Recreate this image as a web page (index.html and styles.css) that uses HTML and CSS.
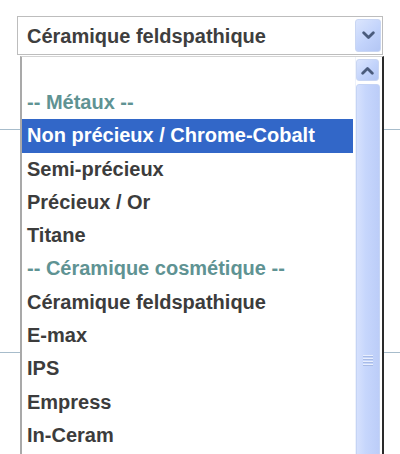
FILE: index.html
```html
<!DOCTYPE html>
<html>
<head>
<meta charset="utf-8">
<link rel="stylesheet" href="styles.css">
</head>
<body>
<div class="page">
  <div class="row row-top">
    <div class="select">
      <span class="select-value">Céramique feldspathique</span>
      <span class="select-btn">
        <svg width="13" height="9" viewBox="0 0 13 9"><path d="M1.7 1.8 L6.5 6.6 L11.3 1.8" fill="none" stroke="#4a5b7c" stroke-width="2.8" stroke-linecap="round" stroke-linejoin="round"/></svg>
      </span>
    </div>
  </div>
  <div class="row row-mid"></div>

  <div class="listbox">
    <ul class="options">
      <li class="opt blank">&nbsp;</li>
      <li class="opt group">-- Métaux --</li>
      <li class="opt selected">Non précieux / Chrome-Cobalt</li>
      <li class="opt">Semi-précieux</li>
      <li class="opt">Précieux / Or</li>
      <li class="opt">Titane</li>
      <li class="opt group">-- Céramique cosmétique --</li>
      <li class="opt">Céramique feldspathique</li>
      <li class="opt">E-max</li>
      <li class="opt">IPS</li>
      <li class="opt">Empress</li>
      <li class="opt">In-Ceram</li>
    </ul>
    <div class="scrollbar">
      <span class="sb-btn">
        <svg width="13" height="9" viewBox="0 0 13 9"><path d="M1.7 7.2 L6.5 2.4 L11.3 7.2" fill="none" stroke="#4a5b7c" stroke-width="2.8" stroke-linecap="round" stroke-linejoin="round"/></svg>
      </span>
      <div class="sb-thumb">
        <span class="grip"></span>
      </div>
    </div>
  </div>
</div>
</body>
</html>
```
FILE: styles.css
```css
html, body {
  margin: 0;
  padding: 0;
  background: #ffffff;
}
body {
  width: 400px;
  height: 454px;
  overflow: hidden;
  font-family: "Liberation Sans", Arial, sans-serif;
  font-weight: bold;
  color: #3a3a3a;
}
.page {
  position: relative;
  width: 400px;
  height: 454px;
}
.row {
  box-sizing: border-box;
  border-bottom: 1px solid #a7bccb;
}
.row-top {
  height: 130px;
  padding: 16px 17px 0;
}
.row-mid {
  height: 223px;
}
.select {
  box-sizing: border-box;
  width: 366px;
  height: 39px;
  border: 1px solid #bdbdbd;
  background: #fff;
  display: flex;
  align-items: center;
  justify-content: space-between;
  padding: 0 1px 0 9px;
}
.select-value {
  font-size: 20px;
  color: #3e3e3e;
  padding-top: 2px;
}
.select-btn {
  width: 26px;
  height: 33px;
  border-radius: 3px;
  background: linear-gradient(135deg, #dbe5fd 0%, #c2d3fb 55%, #b3c6f4 100%);
  border: 1px solid #c9d6f3;
  box-sizing: border-box;
  display: flex;
  align-items: center;
  justify-content: center;
}
.listbox {
  position: absolute;
  left: 20px;
  top: 56px;
  width: 364px;
  height: 420px;
  box-sizing: border-box;
  background: #fff;
  border-left: 2px solid #a9a9a9;
  border-top: 1px solid #d3d3d3;
  border-right: 2px solid #2a2a2a;
  display: flex;
}
.options {
  list-style: none;
  margin: 0;
  padding: 0;
  flex: 0 0 331px;
}
.opt {
  height: 33.3px;
  line-height: 33px;
  padding-left: 5px;
  font-size: 20px;
  color: #3c3c3c;
  white-space: nowrap;
}
.opt.blank {
  height: 29px;
}
.opt.group {
  color: #5f9393;
}
.opt.selected {
  background: #3267c8;
  color: #ffffff;
}
.scrollbar {
  margin-left: 2px;
  width: 25px;
  display: flex;
  flex-direction: column;
  gap: 3px;
  padding-top: 2px;
  border-left: 1px solid #eef2fb;
}
.sb-btn {
  height: 22px;
  width: 23px;
  border-radius: 3px;
  box-sizing: border-box;
  border: 1px solid #c9d6f3;
  background: linear-gradient(135deg, #dbe5fd 0%, #c2d3fb 55%, #b3c6f4 100%);
  display: flex;
  align-items: center;
  justify-content: center;
}
.sb-thumb {
  flex: 1;
  width: 24px;
  box-sizing: border-box;
  border-radius: 3px;
  border: 1px solid #c5d4f5;
  background: linear-gradient(90deg, #d6e1fd 0%, #c6d6fc 40%, #bccdf8 100%);
  position: relative;
}
.grip {
  position: absolute;
  left: 6px;
  top: 270px;
  width: 10px;
  height: 11px;
  background: repeating-linear-gradient(180deg, #e9effd 0, #e9effd 1px, #a8bbe6 1px, #a8bbe6 2px, transparent 2px, transparent 3px);
}
```
